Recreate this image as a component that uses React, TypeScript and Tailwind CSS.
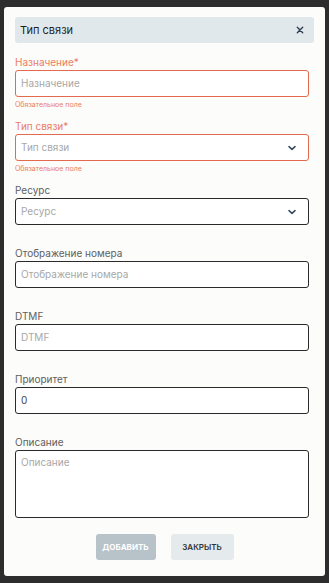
import React from 'react';

const font = { fontFamily: 'Inter, "Noto Sans", sans-serif' };

const Chevron = () => (
  <svg width="10" height="10" viewBox="0 0 10 10" className="text-[#34495e]">
    <path d="M2 3.6 L5 6.4 L8 3.6" fill="none" stroke="currentColor" strokeWidth="1.5" strokeLinecap="round" strokeLinejoin="round" />
  </svg>
);

interface FieldProps {
  label: string;
  placeholder?: string;
  value?: string;
  error?: boolean;
  select?: boolean;
  className?: string;
}

const Field: React.FC<FieldProps> = ({ label, placeholder, value, error, select, className = '' }) => (
  <div className={`mr-[5px] ${className}`}>
    <div className={`h-[12px] leading-[12px] text-[10px] mb-[2px] ${error ? 'text-[#ea7c63]' : 'text-[#606060]'}`}>{label}</div>
    <div
      className={`h-[27px] rounded-[3px] border bg-white flex items-center justify-between pl-[5px] pr-[11px] text-[10px] ${
        error ? 'border-[#e36a4f]' : 'border-[#2a2a2a]'
      }`}
    >
      <span className={value ? 'text-[#444]' : 'text-[#a8a8a8]'}>{value ?? placeholder}</span>
      {select && <Chevron />}
    </div>
    {error && <div className="mt-[3px] h-[9px] leading-[9px] text-[7px] text-[#ea7c63]">Обязательное поле</div>}
  </div>
);

export default function App() {
  return (
    <div className="h-[583px] bg-[#2d2d2d] pt-[7px] px-[4px]" style={font}>
      <div className="h-[569px] bg-[#fcfcfb] rounded-[3px] pt-[10px] px-[11px] flex flex-col">
        <div className="h-[26px] rounded-[3px] bg-[#e1e8ec] flex items-center justify-between pl-[5px] pr-[10px]">
          <span className="text-[11px] text-[#1f1f1f]">Тип связи</span>
          <svg width="8" height="8" viewBox="0 0 8 8" className="text-[#2c3e50]">
            <path d="M1.3 1.3 L6.7 6.7 M6.7 1.3 L1.3 6.7" stroke="currentColor" strokeWidth="1.4" strokeLinecap="round" />
          </svg>
        </div>

        <Field className="mt-[13px]" label="Назначение*" placeholder="Назначение" error />
        <Field className="mt-[11px]" label="Тип связи*" placeholder="Тип связи" error select />
        <Field className="mt-[11px]" label="Ресурс" placeholder="Ресурс" select />
        <Field className="mt-[22px]" label="Отображение номера" placeholder="Отображение номера" />
        <Field className="mt-[22px]" label="DTMF" placeholder="DTMF" />
        <Field className="mt-[22px]" label="Приоритет" value="0" />

        <div className="mt-[22px] mr-[5px]">
          <div className="h-[12px] leading-[12px] text-[10px] mb-[2px] text-[#606060]">Описание</div>
          <div className="h-[68px] rounded-[3px] border border-[#2a2a2a] bg-white pl-[5px] pt-[4px] text-[10px] text-[#a8a8a8]">
            Описание
          </div>
        </div>

        <div className="mt-[16px] flex justify-center gap-[15px]">
          <button className="h-[26px] w-[60px] rounded-[3px] bg-[#b7c2c9] text-white text-[8px] font-bold">ДОБАВИТЬ</button>
          <button className="h-[26px] w-[63px] rounded-[3px] bg-[#e5eaed] text-[#333] text-[8px] font-semibold">ЗАКРЫТЬ</button>
        </div>
      </div>
    </div>
  );
}
